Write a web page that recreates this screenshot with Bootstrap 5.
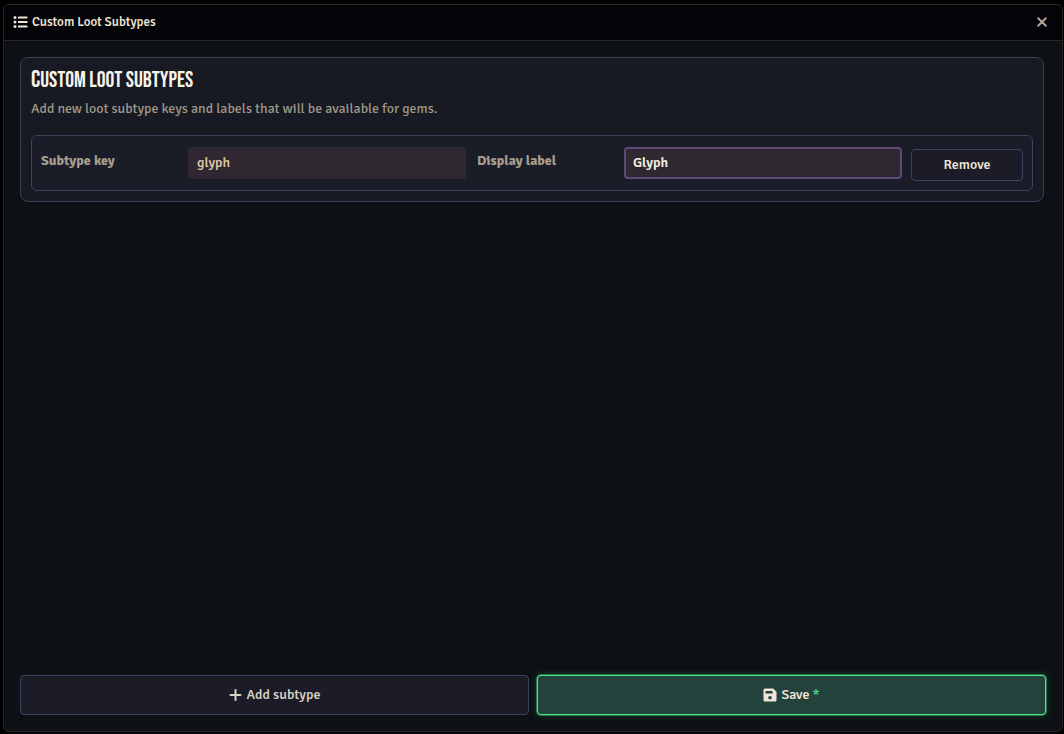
<!DOCTYPE html>
<html lang="en">
<head>
<meta charset="utf-8">
<meta name="viewport" content="width=device-width, initial-scale=1">
<title>Custom Loot Subtypes</title>
<link rel="stylesheet" href="https://cdn.jsdelivr.net/npm/bootstrap@5.3.0/dist/css/bootstrap.min.css">
<style>
body { background: #000; color: #efe6d8; font-family: "Signika", "Roboto", sans-serif; font-size: 14px; line-height: 20px; padding: 4px 1px 2px 3px; }
.app-window { background: #0d1014; border: 1px solid #2e252b; border-radius: 6px; overflow: hidden; }
.title-bar { background: #040308; border-bottom: 1px solid #2e252b; height: 36px; padding: 0 12px 2px 9px; }
.title-bar h1 { font-size: 13px; line-height: 20px; font-weight: 500; }
.close-button { color: #aca393; width: 16px; height: 16px; }
.app-body { padding: 16px; }
.panel { background: #171923; border: 1px solid #3d4056; border-radius: 8px; padding: 10px; margin-right: 2px; }
.panel h2 { font-family: "Modesto Condensed", "Bebas Neue", "Oswald", serif; font-size: 22px; line-height: 24px; font-weight: 400; color: #f7f3e8; margin-bottom: 6px; }
.panel h2::first-letter { font-size: 24px; line-height: 24px; }
.hint { color: #9f9786; margin-bottom: 16px; }
.entry { background: #1a1d28; border: 1px solid #3c435c; border-radius: 6px; padding: 11px 9px; column-gap: 9px; }
.field { display: grid; grid-template-columns: 147px 1fr; flex: 1 1 0; min-width: 0; }
.key-field { margin-right: 2px; }
.field label { color: #a79e8e; font-weight: 700; line-height: 28px; }
.field .form-control { background: #302830; border: 2px solid #302830; border-radius: 4px; color: #e0c9a8; font-size: 14px; line-height: 20px; font-weight: 500; height: 32px; padding: 3px 7px 5px; box-shadow: none; }
.field .form-control.is-active { border-color: #5d4a79; color: #f3ede0; font-weight: 600; }
.tool-button { --bs-btn-color: #d8d1c4; --bs-btn-bg: #1b1c27; --bs-btn-border-color: #3c435c; --bs-btn-hover-color: #fff; --bs-btn-hover-bg: #262838; --bs-btn-hover-border-color: #4c5575; --bs-btn-border-radius: 4px; --bs-btn-font-size: 14px; --bs-btn-line-height: 20px; --bs-btn-font-weight: 500; }
.remove-button { --bs-btn-color: #efe6d8; width: 112px; height: 32px; margin: 2px 0 -2px; padding: 4px; }
.footer-button { height: 40px; }
.save-button { --bs-btn-color: #efe6d8; --bs-btn-bg: #23423b; --bs-btn-border-color: #4bea8f; --bs-btn-hover-bg: #2a5045; --bs-btn-hover-border-color: #4bea8f; box-shadow: 0 0 0 1px #26744c, 0 0 8px #1a4431; }
.unsaved { color: #4bdc8b; }
</style>
</head>
<body class="d-flex flex-column min-vh-100">
<main class="app-window d-flex flex-column flex-grow-1">
  <header class="title-bar d-flex align-items-center">
    <svg class="me-1" width="15" height="14" viewBox="0 0 15 14" fill="#efe6d8" aria-hidden="true"><circle cx="2" cy="2.5" r="1.5"/><circle cx="2" cy="7" r="1.5"/><circle cx="2" cy="11.5" r="1.5"/><rect x="5" y="1.5" width="9.5" height="2" rx=".6"/><rect x="5" y="6" width="9.5" height="2" rx=".6"/><rect x="5" y="10.5" width="9.5" height="2" rx=".6"/></svg>
    <h1 class="m-0 flex-grow-1">Custom Loot Subtypes</h1>
    <button type="button" class="close-button btn border-0 p-0 d-flex align-items-center justify-content-center" aria-label="Close"><svg width="10" height="10" viewBox="0 0 10 10" fill="none" stroke="currentColor" stroke-width="2" stroke-linecap="round"><path d="M1.2 1.2l7.6 7.6M8.8 1.2L1.2 8.8"/></svg></button>
  </header>
  <form class="app-body d-flex flex-column flex-grow-1">
    <section class="panel">
      <h2>Custom loot subtypes</h2>
      <p class="hint">Add new loot subtype keys and labels that will be available for gems.</p>
      <div class="entry d-flex">
        <div class="field key-field"><label for="key">Subtype key</label><input id="key" class="form-control" type="text" value="glyph"></div>
        <div class="field"><label for="name">Display label</label><input id="name" class="form-control is-active" type="text" value="Glyph"></div>
        <button type="button" class="btn tool-button remove-button">Remove</button>
      </div>
    </section>
    <footer class="d-flex gap-2 mt-auto">
      <button type="button" class="btn tool-button footer-button w-50 d-flex align-items-center justify-content-center"><svg class="me-1" width="14" height="14" viewBox="0 0 14 14" fill="none" stroke="currentColor" stroke-width="2" stroke-linecap="round" aria-hidden="true"><path d="M6.500 2v10M1.500 7h10"/></svg>Add subtype</button>
      <button type="submit" class="btn tool-button footer-button save-button w-50 d-flex align-items-center justify-content-center"><svg class="me-1" width="14" height="14" viewBox="0 0 14 14" fill="currentColor" aria-hidden="true"><path fill-rule="evenodd" d="M2 .5h8.200L13.500 3.800V12a1.500 1.500 0 0 1-1.500 1.500H2A1.500 1.500 0 0 1 .5 12V2A1.500 1.500 0 0 1 2 .5zM2.500 3v2.500h7V3zM7 8a1.800 1.800 0 1 0 0 3.600A1.800 1.800 0 0 0 7 8z"/></svg>Save&nbsp;<span class="unsaved">*</span></button>
    </footer>
  </form>
</main>
<script src="https://cdn.jsdelivr.net/npm/bootstrap@5.3.0/dist/js/bootstrap.bundle.min.js"></script>
</body>
</html>
